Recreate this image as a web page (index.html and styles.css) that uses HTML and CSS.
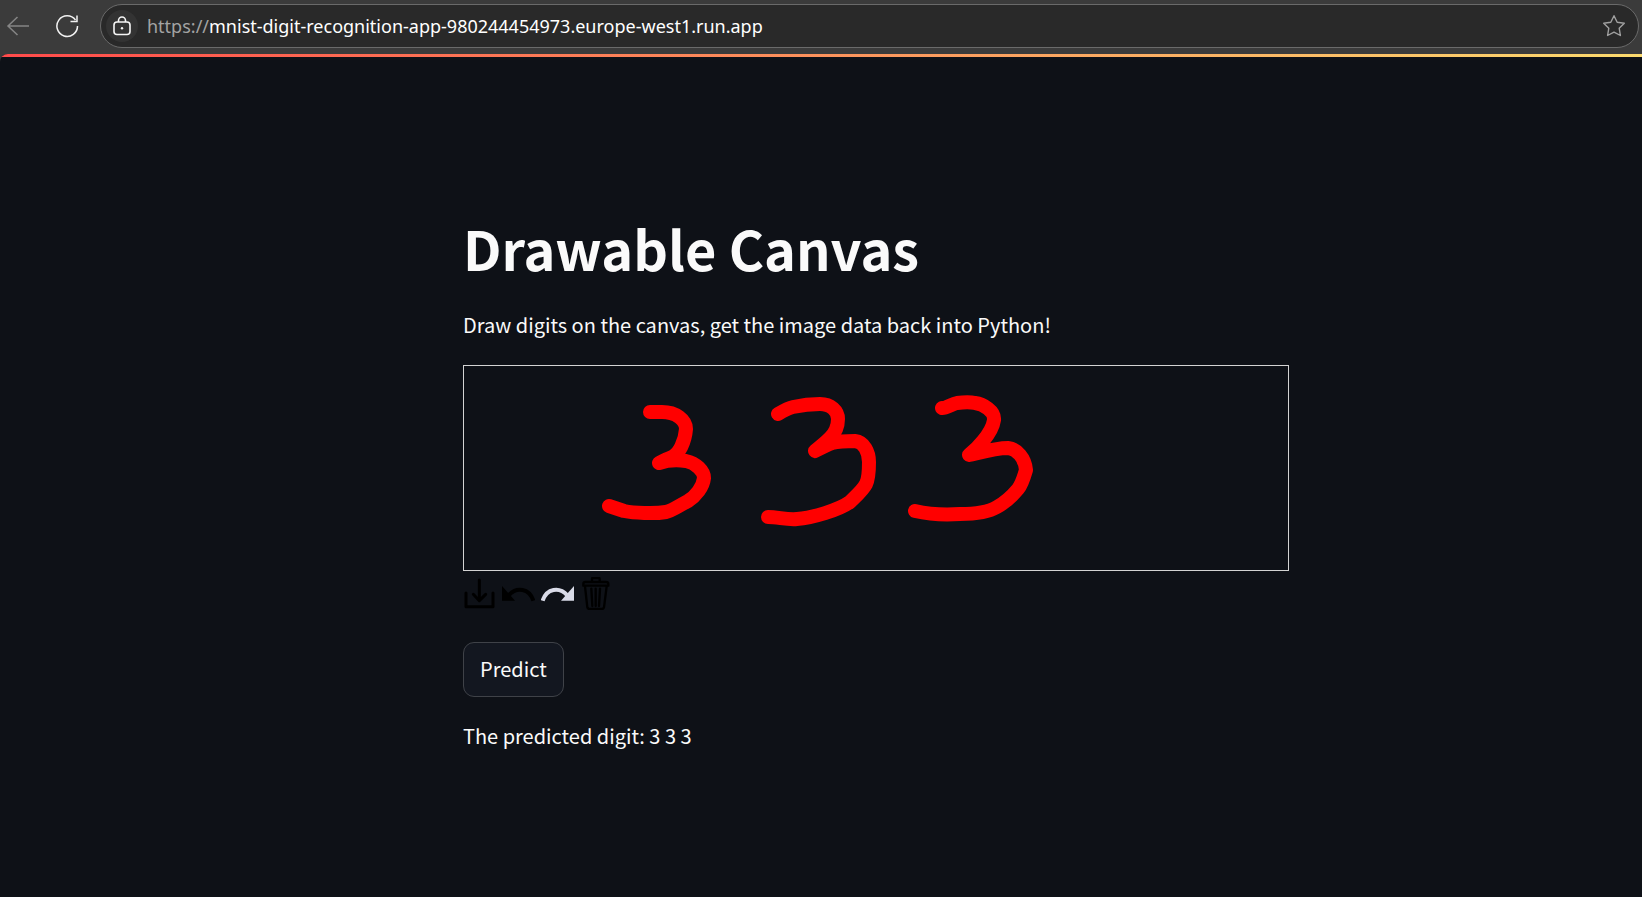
FILE: index.html
```html
<!DOCTYPE html>
<html lang="en">
<head>
<meta charset="utf-8">
<title>Drawable Canvas</title>
<link rel="stylesheet" href="styles.css">
</head>
<body>
<header class="browser-bar">
  <button class="nav-button nav-back" aria-label="Back" disabled>
    <svg viewBox="0 0 24 24"><path d="M23 12H2M11.500 3L2 12L11.500 21"/></svg>
  </button>
  <button class="nav-button nav-reload" aria-label="Reload">
    <svg viewBox="0 0 24 24"><path d="M20.500 6A10.300 10.300 0 1 0 22.500 12M22 1.500V7.500H15.500"/></svg>
  </button>
  <div class="address">
    <button class="site-info" aria-label="Site information">
      <svg viewBox="0 0 20 20"><rect x="2" y="6" width="16" height="12.500" rx="3"/><path d="M6.500 6V4.500A3.500 3.500 0 0 1 13.500 4.500V6"/><circle class="lock-dot" cx="10" cy="12.200" r="1.200"/></svg>
    </button>
    <div class="url" aria-label="Address"><span class="scheme">https://</span>mnist-digit-recognition-app-980244454973.europe-west1.run.app</div>
    <button class="favorite" aria-label="Add to favorites">
      <svg viewBox="0 0 24 24"><path d="M12 1.700L15.200 8.200L22.300 9.200L17.200 14.200L18.400 21.500L12 18.200L5.600 21.500L6.800 14.200L1.700 9.200L8.800 8.200Z"/></svg>
    </button>
  </div>
</header>
<div class="app">
  <div class="decoration"></div>
  <main class="content">
    <h1>Drawable Canvas</h1>
    <p>Draw digits on the canvas, get the image data back into Python!</p>
    <section class="drawing">
      <div class="board">
        <svg viewBox="0 0 824 204" role="img" aria-label="Handwritten digits">
          <path d="M186 46H198C212 46 222 54 222 63C221 76 215 88 208 91C203 93 199 95 195 97C204 94 215 94 222 95C232 97 240 105 240 112C239 121 232 130 224 135C216 139 208 145 202 146C190 148 170 147 160 145L145 140"/>
          <path d="M314 48C319 45 324 42 329 41C338 39 348 38 356 38C367 38 374 45 374 53C374 60 372 66 366 72C361 77 356 81 351 85C357 82 362 79 368 77C376 75 384 75 391 75C400 76 405 86 405 96C405 104 404 114 402 118C399 124 392 130 386 136C375 144 348 152 333 153C323 154 314 151 304 151"/>
          <path d="M478 42C481 43 488 38 493 37C500 36 507 36 511 37C519 38 531 45 530 54C529 61 524 69 519 75C515 80 510 85 505 89C518 86 532 82 544 82C553 83 561 92 562 104C560 111 558 118 554 123C549 129 540 137 533 141C523 147 509 148 496 148C482 149 464 148 451 145"/>
        </svg>
      </div>
      <div class="tools">
        <button aria-label="Send to Streamlit"><svg viewBox="0 0 99 99"><path class="line bold" d="M49 9V70M31 52L49 71L68 52M9 48V89H90V48"/></svg></button>
        <button aria-label="Undo"><svg viewBox="0 0 99 99"><path d="M0 27V71H39Z"/><path class="line thick" d="M20 55C44 28 82 34 94 71"/></svg></button>
        <button class="active" aria-label="Redo"><svg viewBox="0 0 99 99"><path d="M99 27V71H60Z"/><path class="line thick" d="M79 55C55 28 17 34 5 71"/></svg></button>
        <button aria-label="Reset canvas"><svg viewBox="0 0 99 99"><path class="line" d="M36 14V5Q36 3 39 3H56Q59 3 59 5V14M15 28L22 91Q23 96 28 96H66Q71 96 72 91L80 28M34 35L37 87M47 35V87M60 35L57 87"/><path class="line" d="M10 26V21Q10 15 16 15H78Q85 15 85 21V26Z"/></svg></button>
      </div>
    </section>
    <button class="predict">Predict</button>
    <p>The predicted digit: 3 3 3</p>
  </main>
</div>
</body>
</html>
```
FILE: styles.css
```css
* {
  box-sizing: border-box;
}

body {
  margin: 0;
  min-height: 100vh;
  background: #3b3b3b;
  color: #fafafa;
  font-family: "Noto Sans CJK SC", "Noto Sans", sans-serif;
  font-size: 20px;
  line-height: 36px;
  display: flex;
  flex-direction: column;
}

button {
  padding: 0;
  border: 0;
  background: none;
  color: inherit;
  font: inherit;
  display: flex;
  align-items: center;
  justify-content: center;
}

svg {
  display: block;
  fill: none;
  stroke: currentColor;
}

.browser-bar {
  height: 54px;
  padding: 4px 3px 6px 6px;
  display: flex;
  align-items: center;
}

.nav-button svg {
  width: 24px;
  height: 24px;
  stroke-width: 1.5;
}

.nav-back {
  color: #858585;
}

.nav-reload {
  margin: 0 21px 0 25px;
  color: #f2f2f2;
}

.nav-button,
.favorite {
  flex: none;
}

.address {
  flex: 1;
  min-width: 0;
  height: 44px;
  padding: 0 12px 0 5px;
  border: 1px solid #6a6a6a;
  border-radius: 22px;
  background: #292929;
  display: flex;
  align-items: center;
}

.site-info {
  flex: none;
  width: 32px;
  height: 32px;
  border-radius: 50%;
  background: #333333;
  color: #f5f5f5;
}

.site-info svg {
  width: 20px;
  height: 20px;
  stroke-width: 1.6;
}

.lock-dot {
  fill: currentColor;
  stroke: none;
}

.url {
  flex: 1;
  min-width: 0;
  margin-left: 9px;
  overflow: hidden;
  white-space: nowrap;
  color: #ffffff;
  font-family: "Noto Sans", "Open Sans", sans-serif;
  font-size: 18px;
}

.scheme {
  color: #a3a3a3;
}

.favorite {
  color: #a0a0a0;
}

.favorite svg {
  width: 24px;
  height: 24px;
  stroke-width: 1.4;
  stroke-linejoin: round;
}

.app {
  flex: 1;
  border-radius: 8px 0 0 0;
  overflow: hidden;
  background: #0e1117;
}

.decoration {
  height: 3px;
  background: linear-gradient(90deg, #ff4b4b, #fbda6e);
}

.content {
  width: 936px;
  max-width: 100%;
  margin: 0 auto;
  padding: 153px 0 80px 110px;
}

h1 {
  margin: 0 0 21px;
  font-size: 54px;
  font-weight: 700;
  line-height: 76px;
}

p {
  margin: 0;
}

.drawing {
  margin: 22px 0 32px;
}

.board {
  border: 1px solid #d3d3d3;
}

.board svg {
  width: 100%;
  stroke: #ff0000;
  stroke-width: 14;
  stroke-linecap: round;
  stroke-linejoin: round;
}

.tools {
  margin-top: 6px;
  display: flex;
  gap: 6px;
}

.tools button {
  color: #000000;
}

.tools svg {
  width: 33px;
  height: 33px;
  fill: currentColor;
  stroke: none;
}

.tools .active {
  color: #d9dbe8;
}

.tools .line {
  fill: none;
  stroke: currentColor;
  stroke-width: 7;
  stroke-linecap: round;
  stroke-linejoin: round;
}

.tools .bold {
  stroke-width: 9;
}

.tools .thick {
  stroke-width: 12;
  stroke-linecap: butt;
}

.predict {
  margin-bottom: 21px;
  padding: 8px 16px 9px;
  border: 1px solid #3f4248;
  border-radius: 11px;
  background: #131720;
}
```
